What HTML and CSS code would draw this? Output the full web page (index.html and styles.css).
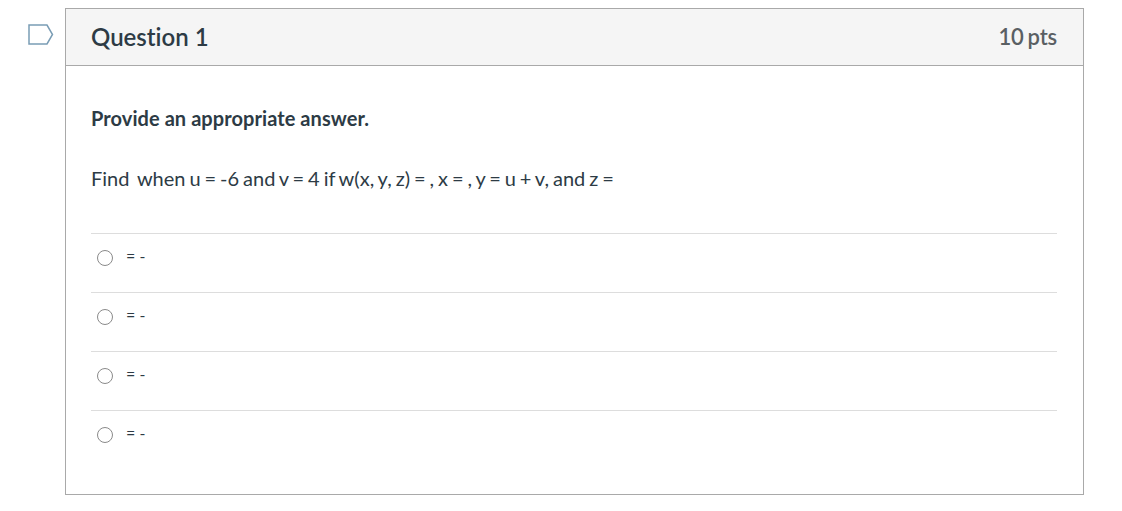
FILE: index.html
```html
<!DOCTYPE html>
<html lang="en">
<head>
<meta charset="utf-8">
<title>Question 1</title>
<link rel="stylesheet" href="styles.css">
</head>
<body>
<main class="page">
  <div class="flag">
    <svg class="flag-icon" width="26" height="21" viewBox="0 0 26 21" aria-hidden="true">
      <path d="M1 1H19L24.5 10.5L19 20H1Z" fill="#fff" stroke="#7a9db5" stroke-width="1.5"/>
    </svg>
  </div>
  <section class="card">
    <header class="card-head">
      <h2 class="title">Question 1</h2>
      <span class="pts">10 pts</span>
    </header>
    <div class="card-body">
      <p class="lead">Provide an appropriate answer.</p>
      <p class="stem">Find &nbsp;when u = -6 and v = 4 if w(x, y, z) = , x = , y = u + v, and z = </p>
      <ul class="answers">
        <li class="answer"><span class="radio"></span><span class="answer-text">= -</span></li>
        <li class="answer"><span class="radio"></span><span class="answer-text">= -</span></li>
        <li class="answer"><span class="radio"></span><span class="answer-text">= -</span></li>
        <li class="answer"><span class="radio"></span><span class="answer-text">= -</span></li>
      </ul>
    </div>
  </section>
</main>
</body>
</html>
```
FILE: styles.css
```css
* { box-sizing: border-box; }
html, body { margin: 0; padding: 0; background: #fff; }
body { font-family: Lato, "Open Sans", sans-serif; color: #2d3b45; overflow: hidden; font-variant-ligatures: none; }
.page { display: flex; width: 1122px; height: 511px; padding: 8px 0 0 27px; }
.flag { width: 38px; flex: none; padding: 16px 0 0 1px; }
.flag-icon { display: block; }
.card { width: 1019px; height: 487px; border: 1px solid #a9a9a9; flex: none; }
.card-head { display: flex; justify-content: space-between; align-items: center; height: 57px; padding: 0 26px 0 25px; background: #f5f5f5; border-bottom: 1px solid #a9a9a9; }
.title { margin: 0; font-size: 24px; font-weight: 600; line-height: 56px; color: #2d3b45; }
.pts { font-size: 22px; font-weight: 600; color: #5a5f63; word-spacing: -1.5px; letter-spacing: -0.15px; position: relative; top: -1px; }
.card-body { padding: 0 26px 0 25px; }
.lead { margin: 38px 0 0; font-size: 20px; font-weight: 700; line-height: 28px; letter-spacing: 0.07px; }
.stem { margin: 32px 0 0; font-size: 20px; line-height: 28px; word-spacing: -1.18px; }
.answers { list-style: none; margin: 41px 0 0; padding: 0; }
.answer { display: flex; align-items: flex-start; height: 59px; border-top: 1px solid #ddd; padding: 16px 0 0 6px; }
.radio { width: 16px; height: 16px; border: 1.5px solid #8a8a8a; border-radius: 50%; background: #fff; flex: none; }
.answer-text { margin-left: 13px; font-size: 16px; line-height: 12px; }
```
